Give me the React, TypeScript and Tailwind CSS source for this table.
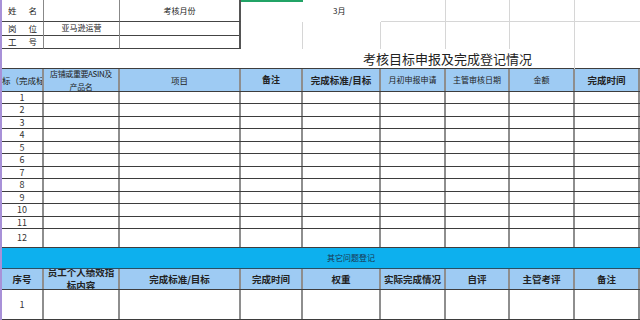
import React from 'react';

const cols = 'grid grid-cols-[42px_76px_121px_62px_78px_65px_64px_65px_65px]';
const vline = 'border-r-2 border-r-[#8e8e8e]';
const light = 'border-r border-r-[#d6d6d6]';

const Cell: React.FC<{ className?: string; children?: React.ReactNode }> = ({ className = '', children }) => (
  <div className={`flex items-center justify-center overflow-hidden text-center ${vline} ${className}`}>{children}</div>
);

const heights = ['h-[12px]', 'h-[13px]', 'h-[12px]', 'h-[13px]', 'h-[12px]', 'h-[13px]', 'h-[12px]', 'h-[13px]', 'h-[12px]', 'h-[13px]', 'h-[12px]', 'h-[19px]'];

export default function App() {
  return (
    <div className="w-[640px] h-[320px] overflow-hidden bg-white border-l-2 border-l-[#a891d8] text-[#222] [font-family:'Noto_Sans_CJK_SC','Liberation_Sans',sans-serif]">
      {/* info block */}
      <div className={`${cols} h-[22px] text-[8.5px]`}>
        <div className="flex items-center justify-between px-[6px] border-b border-b-[#444] border-r border-r-[#888]">
          <span>姓</span>
          <span>名</span>
        </div>
        <div className="border-b border-b-[#444] border-r border-r-[#888]" />
        <div className="flex items-center justify-center border-b border-b-[#444] border-r-2 border-r-[#555] text-[8px]">考核月份</div>
        <div className="border-t-2 border-t-[#21a366]" />
        <div className="flex items-center pl-[30px] text-[8px]">3月</div>
        <div className={`${light} border-b border-b-[#d6d6d6]`} />
        <div className={`${light} border-b border-b-[#d6d6d6]`} />
        <div className={`${light} border-b border-b-[#d6d6d6]`} />
        <div className="border-b border-b-[#d6d6d6]" />
      </div>
      <div className={`${cols} h-[13px] text-[8.5px]`}>
        <div className="flex items-center justify-between px-[6px] border-b border-b-[#444] border-r border-r-[#888]">
          <span>岗</span>
          <span>位</span>
        </div>
        <div className="flex items-center justify-center border-b border-b-[#444] border-r border-r-[#888] text-[8px]">亚马逊运营</div>
        <div className="border-b border-b-[#444] border-r-2 border-r-[#555]" />
        <div className={light} />
        <div className={light} />
        <div className={light} />
        <div className={light} />
        <div className={light} />
        <div />
      </div>
      <div className={`${cols} h-[14px] text-[8.5px]`}>
        <div className="flex items-center justify-between px-[6px] border-b border-b-[#444] border-r border-r-[#888]">
          <span>工</span>
          <span>号</span>
        </div>
        <div className="border-b border-b-[#444] border-r border-r-[#888]" />
        <div className="border-b border-b-[#444] border-r-2 border-r-[#555]" />
        <div className={light} />
        <div className={light} />
        <div className={light} />
        <div className={light} />
        <div className={light} />
        <div />
      </div>
      <div className={`${cols} h-[19px]`}>
        <div />
        <div />
        <div />
        <div />
        <div className={`col-span-4 flex items-center pl-[60px] text-[13px] whitespace-nowrap ${light}`}>考核目标申报及完成登记情况</div>
        <div />
      </div>

      {/* main table header */}
      <div className={`${cols} h-[24px] bg-[#9ecbf3] border-y border-y-[#3d3d3d] text-[8px]`}>
        <Cell className="justify-start whitespace-nowrap text-[8.5px]">标（完成标）</Cell>
        <Cell className="leading-[13px] tracking-[-0.4px] px-[1px]">
          店铺或重要ASIN及
          <br />
          产品名
        </Cell>
        <Cell className="text-[8.5px]">项目</Cell>
        <Cell className="font-bold text-[9px]">备注</Cell>
        <Cell className="font-bold text-[9.5px] whitespace-nowrap">完成标准/目标</Cell>
        <Cell>月初申报申请</Cell>
        <Cell>主管审核日期</Cell>
        <Cell>金额</Cell>
        <Cell className="font-bold text-[9.5px]">完成时间</Cell>
      </div>

      {heights.map((h, i) => (
        <div key={i} className={`${cols} ${h} border-b border-b-[#3d3d3d] text-[9px] text-[#333]`}>
          <Cell>{i + 1}</Cell>
          <Cell />
          <Cell />
          <Cell />
          <Cell />
          <Cell />
          <Cell />
          <Cell />
          <Cell />
        </div>
      ))}

      {/* other issues */}
      <div className="h-[21px] bg-[#0db0ee] border-b border-b-[#2b4f63] flex items-center pl-[325px] text-[8px] text-[#1b3550]">
        其它问题登记
      </div>
      <div className={`${cols} h-[21px] bg-[#9ecbf3] border-b border-b-[#3d3d3d] font-bold text-[9.5px]`}>
        <Cell>序号</Cell>
        <Cell className="leading-[13px] px-[2px]">员工个人绩效指标内容</Cell>
        <Cell>完成标准/目标</Cell>
        <Cell>完成时间</Cell>
        <Cell>权重</Cell>
        <Cell className="whitespace-nowrap">实际完成情况</Cell>
        <Cell>自评</Cell>
        <Cell>主管考评</Cell>
        <Cell>备注</Cell>
      </div>
      <div className={`${cols} h-[30px] border-b border-b-[#3d3d3d] text-[9px] text-[#333]`}>
        <Cell>1</Cell>
        <Cell />
        <Cell />
        <Cell />
        <Cell />
        <Cell />
        <Cell />
        <Cell />
        <Cell />
      </div>
    </div>
  );
}
